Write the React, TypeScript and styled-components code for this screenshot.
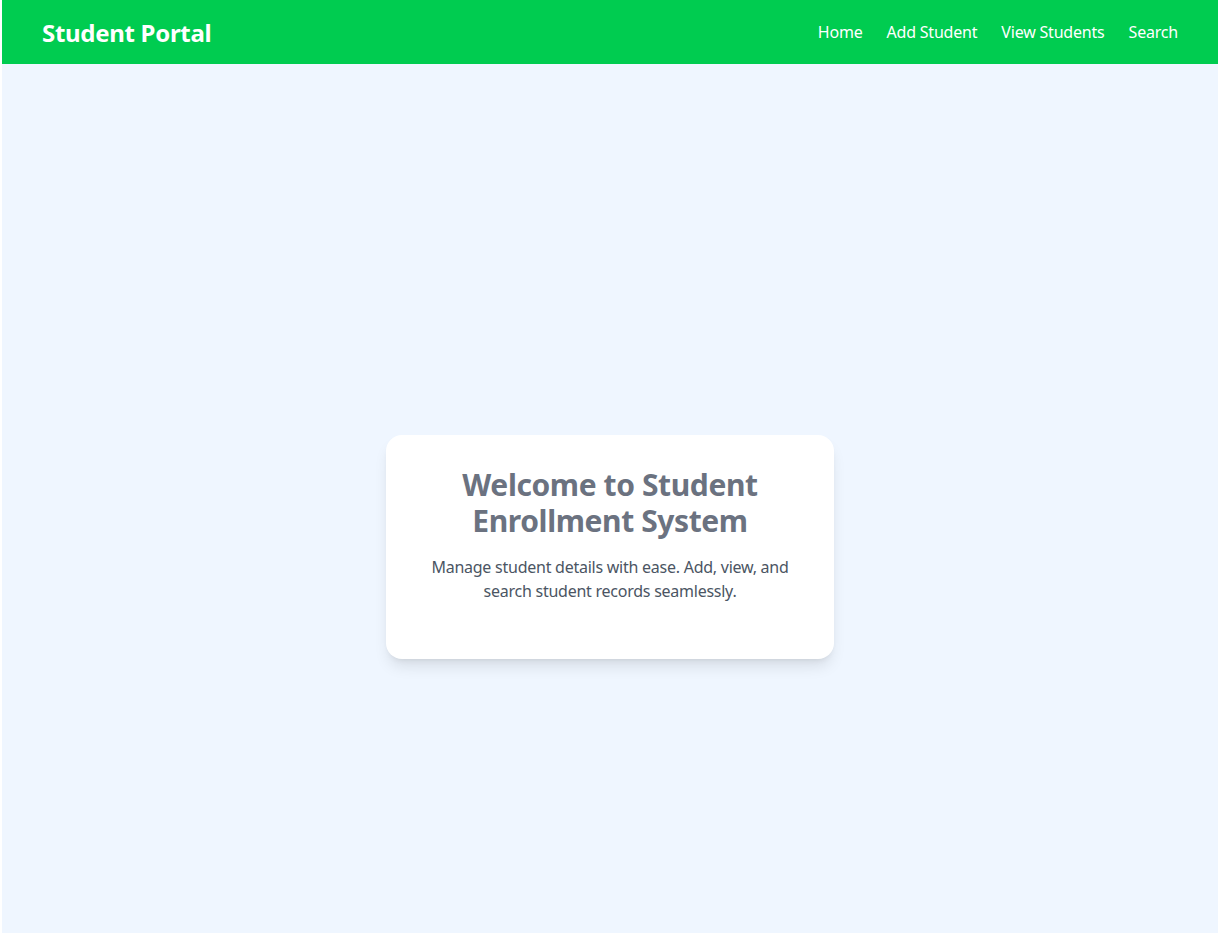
import React from 'react';
import styled, { createGlobalStyle } from 'styled-components';

const GlobalStyle = createGlobalStyle`
  * {
    box-sizing: border-box;
  }

  body {
    margin: 0;
    background: #ffffff;
    font-family: 'Noto Sans', 'Open Sans', sans-serif;
  }

  #root {
    padding: 0 2px;
  }
`;

const navItems = ['Home', 'Add Student', 'View Students', 'Search'];

const App = () => {
  return (
    <>
      <GlobalStyle />
      <Header>
        <Brand>Student Portal</Brand>
        <Nav>
          {navItems.map((item) => (
            <NavLink key={item} href="#">
              {item}
            </NavLink>
          ))}
        </Nav>
      </Header>
      <Main>
        <Card>
          <Title>Welcome to Student Enrollment System</Title>
          <Text>
            Manage student details with ease. Add, view, and search student
            records seamlessly.
          </Text>
        </Card>
      </Main>
    </>
  );
};

export default App;

const Header = styled.header`
  height: 64px;
  padding: 0 40px;

  display: flex;
  flex-direction: row;
  align-items: center;
  justify-content: space-between;

  background: #00cc50;
  color: #ffffff;
`;

const Brand = styled.h1`
  margin: 0;
  font-size: 24px;
  font-weight: 700;
  letter-spacing: -0.3px;
`;

const Nav = styled.nav`
  display: flex;
  flex-direction: row;
  gap: 24px;
`;

const NavLink = styled.a`
  color: #ffffff;
  font-size: 16px;
  letter-spacing: -0.2px;
  text-decoration: none;
`;

const Main = styled.main`
  min-height: 100vh;
  padding-top: 32px;

  display: flex;
  align-items: center;
  justify-content: center;

  background: #eff6ff;
`;

const Card = styled.div`
  width: 448px;
  padding: 32px;

  background: #ffffff;
  border-radius: 16px;
  box-shadow: 0 10px 15px -3px rgba(0, 0, 0, 0.1),
    0 4px 6px -4px rgba(0, 0, 0, 0.1);
  text-align: center;
`;

const Title = styled.h2`
  margin: 0 0 16px;
  font-size: 30px;
  line-height: 36px;
  font-weight: 700;
  letter-spacing: -0.4px;
  color: #6b7280;
`;

const Text = styled.p`
  margin: 0 0 24px;
  font-size: 16px;
  line-height: 24px;
  letter-spacing: -0.25px;
  color: #4b5563;
`;
